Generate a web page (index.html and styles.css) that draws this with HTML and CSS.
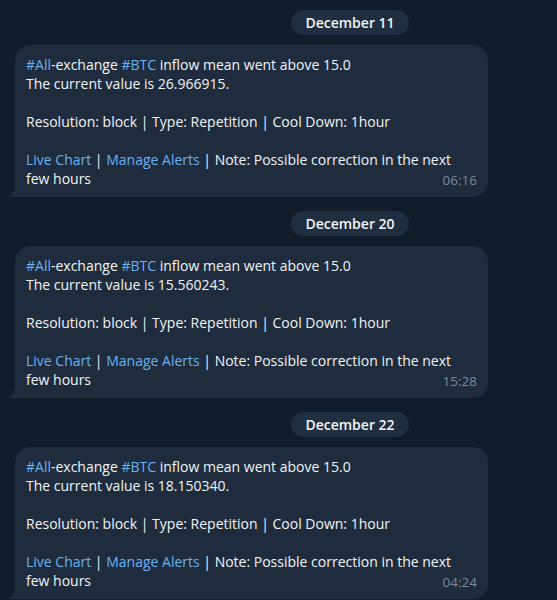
FILE: index.html
```html
<!DOCTYPE html>
<html lang="en">
<head>
  <meta charset="UTF-8" />
  <meta name="viewport" content="width=device-width, initial-scale=1" />
  <title>Alerts</title>
  <link rel="stylesheet" href="styles.css">
</head>
<body>
  <div class="chat">
    <div class="day">
      <div class="date-row"><span class="date-pill">December 11</span></div>
      <div class="bubble">
        <p><a href="#">#All</a>-exchange <a href="#">#BTC</a> inflow mean went above 15.0<br>The current value is 26.966915.</p>
        <p>Resolution: block | Type: Repetition | Cool Down: 1hour</p>
        <p><a href="#">Live Chart</a> | <a href="#">Manage Alerts</a> | Note: Possible correction in the next few hours<span class="time">06:16</span></p>
      </div>
    </div>

    <div class="day">
      <div class="date-row"><span class="date-pill">December 20</span></div>
      <div class="bubble">
        <p><a href="#">#All</a>-exchange <a href="#">#BTC</a> inflow mean went above 15.0<br>The current value is 15.560243.</p>
        <p>Resolution: block | Type: Repetition | Cool Down: 1hour</p>
        <p><a href="#">Live Chart</a> | <a href="#">Manage Alerts</a> | Note: Possible correction in the next few hours<span class="time">15:28</span></p>
      </div>
    </div>

    <div class="day">
      <div class="date-row"><span class="date-pill">December 22</span></div>
      <div class="bubble">
        <p><a href="#">#All</a>-exchange <a href="#">#BTC</a> inflow mean went above 15.0<br>The current value is 18.150340.</p>
        <p>Resolution: block | Type: Repetition | Cool Down: 1hour</p>
        <p><a href="#">Live Chart</a> | <a href="#">Manage Alerts</a> | Note: Possible correction in the next few hours<span class="time">04:24</span></p>
      </div>
    </div>
  </div>
</body>
</html>
```

FILE: styles.css
```css
* { margin: 0; padding: 0; box-sizing: border-box; }
html, body {
  height: 100%;
  overflow: hidden;
  background: #121d2b;
  font-family: 'Open Sans', sans-serif;
  color: #f2f4f6;
}
.chat {
  display: flex;
  flex-direction: column;
  padding-top: 10px;
}
.day {
  display: flex;
  flex-direction: column;
  margin-bottom: 14px;
}
.date-row {
  display: flex;
  justify-content: center;
  padding-left: 143px;
  margin-bottom: 10px;
}
.date-pill {
  background: #1f2e40;
  color: #f2f4f6;
  font-size: 14px;
  font-weight: 600;
  height: 25px;
  line-height: 25px;
  padding: 0 14px;
  border-radius: 13px;
}
.bubble {
  position: relative;
  margin-left: 15px;
  width: 473px;
  background: #1e2c3d;
  border-radius: 15px 15px 15px 0;
  padding: 10px 12px 9px 11px;
  font-size: 14px;
  line-height: 19px;
}
.bubble::before {
  content: '';
  position: absolute;
  left: -7px;
  bottom: 0;
  width: 7px;
  height: 12px;
  background: #1e2c3d;
  clip-path: path('M7 0 C7 6 4 10 0 12 L7 12 Z');
}
.bubble p { margin-bottom: 19px; }
.bubble p:last-child { margin-bottom: 0; }
.bubble a {
  color: #6ab2f2;
  text-decoration: none;
}
.time {
  float: right;
  color: #7c8a99;
  font-size: 13.5px;
  margin-top: 2px;
  margin-bottom: -2px;
  margin-right: -1px;
}
```
